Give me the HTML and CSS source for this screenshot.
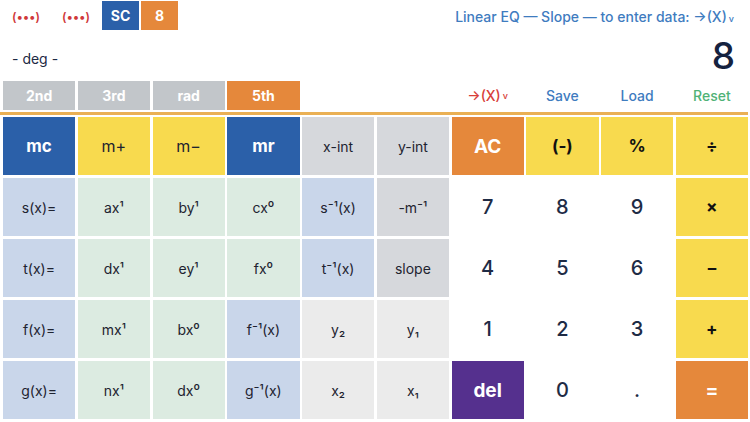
FILE: index.html
```html
<!DOCTYPE html>
<html>
<head>
<meta charset="utf-8">
<link rel="stylesheet" href="styles.css">
</head>
<body>
<div class="app">
  <div class="top">
    <div class="top-left">
      <span class="dots">(•••)</span>
      <span class="dots dots2">(•••)</span>
      <span class="chip chip-blue">SC</span>
      <span class="chip chip-orange">8</span>
    </div>
    <div class="hint">Linear EQ — Slope — to enter data: →(X)<span class="v">v</span></div>
  </div>
  <div class="display">
    <span class="deg">- deg -</span>
    <span class="result">8</span>
  </div>
  <div class="tabs">
    <div class="tab">2nd</div>
    <div class="tab">3rd</div>
    <div class="tab">rad</div>
    <div class="tab tab-on">5th</div>
    <div class="spacer"></div>
    <div class="link red">→(X)<span class="v">v</span></div>
    <div class="link blue">Save</div>
    <div class="link blue">Load</div>
    <div class="link green">Reset</div>
  </div>
  <div class="rule"></div>
  <div class="keys">
    <div class="key k-blue bold">mc</div>
    <div class="key k-yellow med">m+</div>
    <div class="key k-yellow med">m−</div>
    <div class="key k-blue bold">mr</div>
    <div class="key k-gray">x-int</div>
    <div class="key k-gray">y-int</div>
    <div class="key k-orange big">AC</div>
    <div class="key k-yellow op">(-)</div>
    <div class="key k-yellow op">%</div>
    <div class="key k-yellow op">÷</div>

    <div class="key k-lblue">s(x)=</div>
    <div class="key k-green">ax¹</div>
    <div class="key k-green">by¹</div>
    <div class="key k-green">cx⁰</div>
    <div class="key k-lblue">s⁻¹(x)</div>
    <div class="key k-gray">-m⁻¹</div>
    <div class="key num">7</div>
    <div class="key num">8</div>
    <div class="key num">9</div>
    <div class="key k-yellow op">×</div>

    <div class="key k-lblue">t(x)=</div>
    <div class="key k-green">dx¹</div>
    <div class="key k-green">ey¹</div>
    <div class="key k-green">fx⁰</div>
    <div class="key k-lblue">t⁻¹(x)</div>
    <div class="key k-gray">slope</div>
    <div class="key num">4</div>
    <div class="key num">5</div>
    <div class="key num">6</div>
    <div class="key k-yellow op">–</div>

    <div class="key k-lblue">f(x)=</div>
    <div class="key k-green">mx¹</div>
    <div class="key k-green">bx⁰</div>
    <div class="key k-lblue">f⁻¹(x)</div>
    <div class="key k-lgray">y₂</div>
    <div class="key k-lgray">y₁</div>
    <div class="key num">1</div>
    <div class="key num">2</div>
    <div class="key num">3</div>
    <div class="key k-yellow op">+</div>

    <div class="key k-lblue">g(x)=</div>
    <div class="key k-green">nx¹</div>
    <div class="key k-green">dx⁰</div>
    <div class="key k-lblue">g⁻¹(x)</div>
    <div class="key k-lgray">x₂</div>
    <div class="key k-lgray">x₁</div>
    <div class="key k-purple big">del</div>
    <div class="key num">0</div>
    <div class="key num">.</div>
    <div class="key k-orange big">=</div>
  </div>
</div>
</body>
</html>
```
FILE: styles.css
```css
* { box-sizing: border-box; }
html, body { margin: 0; padding: 0; background: #ffffff; }
body {
  font-family: Inter, "Noto Sans", "Liberation Sans", sans-serif;
  width: 750px;
  height: 422px;
  overflow: hidden;
  color: #1d2a44;
}
.app { display: flex; flex-direction: column; }

.top {
  height: 32px;
  display: flex;
  align-items: center;
  justify-content: space-between;
  padding: 0 16px 0 12px;
}
.top-left { display: flex; align-items: center; height: 32px; }
.dots {
  width: 28px;
  text-align: center;
  white-space: nowrap;
  color: #d0383a;
  font-size: 12px;
  font-weight: 600;
  letter-spacing: 0.2px;
}
.dots2 { margin-left: 22px; }
.chip {
  height: 29px;
  width: 37px;
  display: flex;
  align-items: center;
  justify-content: center;
  color: #ffffff;
  font-weight: 700;
  font-size: 14px;
  margin-top: -2px;
}
.chip-blue { background: #2b60a9; margin-left: 12px; }
.chip-orange { background: #e5883b; margin-left: 2px; }
.hint {
  color: #3f7cbf;
  font-size: 14px;
  font-weight: 500;
}
.v { font-size: 9px; margin-left: 2px; }

.display {
  height: 46px;
  display: flex;
  align-items: center;
  justify-content: space-between;
  padding: 0 15px 0 12px;
}
.deg { font-size: 14px; color: #1d2a44; padding-top: 6px; }
.result { font-size: 37px; font-weight: 500; color: #15223f; line-height: 1; }

.tabs {
  display: grid;
  grid-template-columns: repeat(10, 1fr);
  column-gap: 2.5px;
  padding: 3px 2px 0 3px;
  height: 32px;
}
.spacer { grid-column: span 2; }
.tab {
  background: #c2c6ca;
  color: #ffffff;
  font-weight: 700;
  font-size: 14px;
  display: flex;
  align-items: center;
  justify-content: center;
}
.tab-on { background: #e5883b; }
.link {
  display: flex;
  align-items: center;
  justify-content: center;
  font-size: 14px;
  font-weight: 500;
}
.red { color: #d8403a; }
.blue { color: #3f7cbf; }
.green { color: #4fb276; }

.rule {
  height: 3px;
  background: #eab054;
  margin: 2px 2px 0 0;
}

.keys {
  display: grid;
  grid-template-columns: repeat(10, 1fr);
  grid-auto-rows: 58px;
  gap: 3px 2.5px;
  padding: 2px 2px 0 3px;
}
.key {
  display: flex;
  align-items: center;
  justify-content: center;
  font-size: 14px;
  color: #1e2330;
}
.k-blue { background: #2b60a9; color: #ffffff; }
.k-yellow { background: #f8da4e; }
.k-gray { background: #d6d8dc; }
.k-lgray { background: #ebebeb; }
.k-lblue { background: #c9d6ea; }
.k-green { background: #dcebe1; }
.k-orange { background: #e5883b; color: #ffffff; }
.k-purple { background: #55308e; color: #ffffff; }
.bold { font-weight: 700; font-size: 17px; }
.med { font-size: 16px; }
.big { font-weight: 700; font-size: 19px; }
.op { font-weight: 700; font-size: 17px; color: #111111; }
.num { font-size: 20px; font-weight: 500; color: #1e2b45; }
```
